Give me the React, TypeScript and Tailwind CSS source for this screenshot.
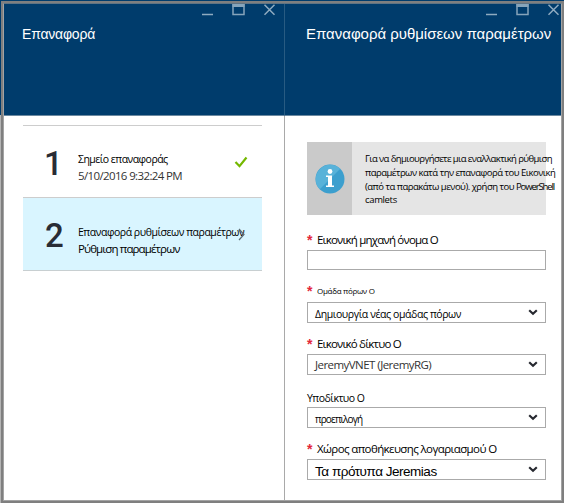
import type { ReactNode } from "react";

function WindowControls() {
  return (
    <svg width="75" height="14" viewBox="0 0 75 14" fill="none" className="shrink-0">
      <path d="M1 10.500h11" stroke="#8fabc0" strokeWidth="1.500" />
      <path d="M32 .5h11v10H32z" stroke="#86a4ba" strokeWidth="1.500" />
      <path d="M31.500 1.500h12" stroke="#86a4ba" strokeWidth="3" />
      <path d="M63.500 .7l10 10m0-10l-10 10" stroke="#8fabc0" strokeWidth="1.500" />
    </svg>
  );
}

function Caret() {
  return (
    <svg width="10" height="7" viewBox="0 0 10 7" fill="none" className="mr-[7px] shrink-0">
      <path d="M1.200 1.300L5 4.700l3.800-3.400" stroke="#26282f" strokeWidth="2.200" />
    </svg>
  );
}

function Label({ children, required = false, className }: { children: ReactNode; required?: boolean; className: string }) {
  return (
    <div className="flex h-5 items-center whitespace-nowrap">
      {required && <span className="w-[10px] shrink-0 font-['Liberation_Sans',sans-serif] text-[14px] leading-5 font-bold text-[#e3263a]">*</span>}
      <span className={className}>{children}</span>
    </div>
  );
}

function Select({ children, className }: { children: ReactNode; className: string }) {
  return (
    <div className="flex h-[21px] w-[239px] items-center justify-between border border-[#aaaaaa] bg-white pl-[7px]">
      <span className={"whitespace-nowrap " + className}>{children}</span>
      <Caret />
    </div>
  );
}

export default function App() {
  return (
    <div className="h-[503px] w-[564px] overflow-hidden bg-linear-to-b from-[#003c6c] from-[115px] to-[#b4b4b4] to-[115px] pt-px pl-px">
      <div className="h-[502px] w-[563px] border-2 border-[#7f7f7f]">
        <div className="flex h-[498px] w-[559px] border border-t-[#5f7484] border-r-[#a3a3a3] border-b-[#a3a3a3] border-l-[#a3a3a3] bg-white font-['Open_Sans','Noto_Sans',sans-serif] text-black">
          <section className="w-[280px] shrink-0">
            <header className="h-[112px] border-b border-[#6c89a0] bg-[#003c6c]">
              <div className="flex h-5 justify-end pr-[8px]">
                <WindowControls />
              </div>
              <h1 className="pl-[18px] font-['Liberation_Sans',sans-serif] text-[14px] leading-5 tracking-[-0.2px] text-white">Επαναφορά</h1>
            </header>
            <ol className="mt-[9px] ml-[19px] w-[239px] border-t border-[#cdcdcd]">
              <li className="flex h-[72px] border-b border-[#cdcdcd]">
                <span className="w-[55px] pt-[18px] pl-[21px] font-['Roboto',sans-serif] text-[33px] leading-10 font-medium text-[#292c35]">1</span>
                <div className="w-[156px] pt-[24px] whitespace-nowrap">
                  <p className="text-[10.5px] leading-[18px] tracking-[-0.52px]">Σημείο επαναφοράς</p>
                  <p className="text-[11.5px] leading-[16px] tracking-[-0.63px] text-[#333]">5/10/2016 9:32:24 PM</p>
                </div>
                <svg width="14" height="12" viewBox="0 0 14 12" fill="none" className="mt-[30px]">
                  <path d="M1.500 6l4 4.200L12.500 1.500" stroke="#74b800" strokeWidth="2.200" />
                </svg>
              </li>
              <li className="flex h-[73px] border-b border-[#c8cfd1] bg-[#d9f5ff]">
                <span className="w-[55px] pt-[18px] pl-[22px] font-['Roboto',sans-serif] text-[33px] leading-10 font-medium text-[#292c35]">2</span>
                <div className="w-[160px] pt-[26px] whitespace-nowrap">
                  <p className="text-[10.5px] leading-[17px] tracking-[-0.46px]">Επαναφορά ρυθμίσεων παραμέτρων</p>
                  <p className="text-[11.5px] leading-[15px] tracking-[-0.88px]">Ρύθμιση παραμέτρων</p>
                </div>
                <svg width="8" height="13" viewBox="0 0 8 13" fill="none" className="mt-[30px]">
                  <path d="M1 1l5 5.500L1 12" stroke="#5b6b73" strokeWidth="1.200" />
                </svg>
              </li>
            </ol>
          </section>
          <section className="w-[277px] shrink-0 border-l border-[#a9a9a9]">
            <header className="-ml-px h-[112px] border-b border-l border-b-[#6c89a0] border-l-[#285b82] bg-[#003c6c]">
              <div className="flex h-5 justify-end pr-px">
                <WindowControls />
              </div>
              <h2 className="pl-[21px] font-['Liberation_Sans',sans-serif] text-[15px] leading-5 tracking-[-0.02px] whitespace-nowrap text-white">Επαναφορά ρυθμίσεων παραμέτρων</h2>
            </header>
            <div className="pl-[22px]">
              <div className="mt-[26px] flex h-[73px] w-[239px] bg-[#e5e5e5]">
                <div className="flex w-[45px] shrink-0 items-center justify-center bg-[#cacaca]">
                  <svg width="30" height="30" viewBox="0 0 30 30">
                    <circle cx="15" cy="15" r="14.500" fill="#3c9fce" />
                    <path d="M4.750 25.250A14.500 14.500 0 0 1 25.250 4.750z" fill="#58b2d9" />
                    <circle cx="15" cy="7.500" r="2.400" fill="#fff" />
                    <path d="M11 11.500h6v10h2V23h-8v-1.500h2V13h-2z" fill="#fff" />
                  </svg>
                </div>
                <p className="pt-[10px] pl-[13px] text-[9.5px] leading-[13.8px] tracking-[-0.5px] whitespace-nowrap">
                  <span className="tracking-[-0.59px]">Για να δημιουργήσετε μια εναλλακτική ρύθμιση</span><br />
                  παραμέτρων κατά την επαναφορά του Εικονική<br />
                  (από τα παρακάτω μενού). χρήση του <span className="tracking-[-1.1px]">PowerShell</span><br />
                  <span className="tracking-[-0.35px]">camlets</span>
                </p>
              </div>
              <div className="h-[15px]" />
              <Label required className="text-[11.5px] tracking-[-0.8px]">Εικονική μηχανή όνομα Ο</Label>
              <div className="h-[20px] w-[239px] border border-[#aaaaaa]" />
              <div className="h-[11px]" />
              <Label required className="text-[8px] tracking-[-0.3px]">Ομάδα πόρων Ο</Label>
              <div className="h-px" />
              <Select className="pt-[4px] text-[10.5px] tracking-[-0.41px]">Δημιουργία νέας ομάδας πόρων</Select>
              <div className="h-[11px]" />
              <Label required className="text-[11.5px] tracking-[-0.8px]">Εικονικό δίκτυο Ο</Label>
              <Select className="text-[11.5px] tracking-[-0.55px] text-[#333]">JeremyVNET (JeremyRG)</Select>
              <div className="h-[12px]" />
              <Label className="pt-[3px] text-[10.5px] tracking-[-0.5px]">Υποδίκτυο Ο</Label>
              <Select className="pt-[3px] text-[10px] tracking-[-0.85px]">προεπιλογή</Select>
              <div className="h-[11px]" />
              <Label required className="text-[11.5px] tracking-[-0.6px]">Χώρος αποθήκευσης λογαριασμού Ο</Label>
              <Select className="pt-[5px] font-['Liberation_Sans',sans-serif] text-[13.5px] tracking-[-0.48px]">Τα πρότυπα Jeremias</Select>
            </div>
          </section>
        </div>
      </div>
    </div>
  );
}
